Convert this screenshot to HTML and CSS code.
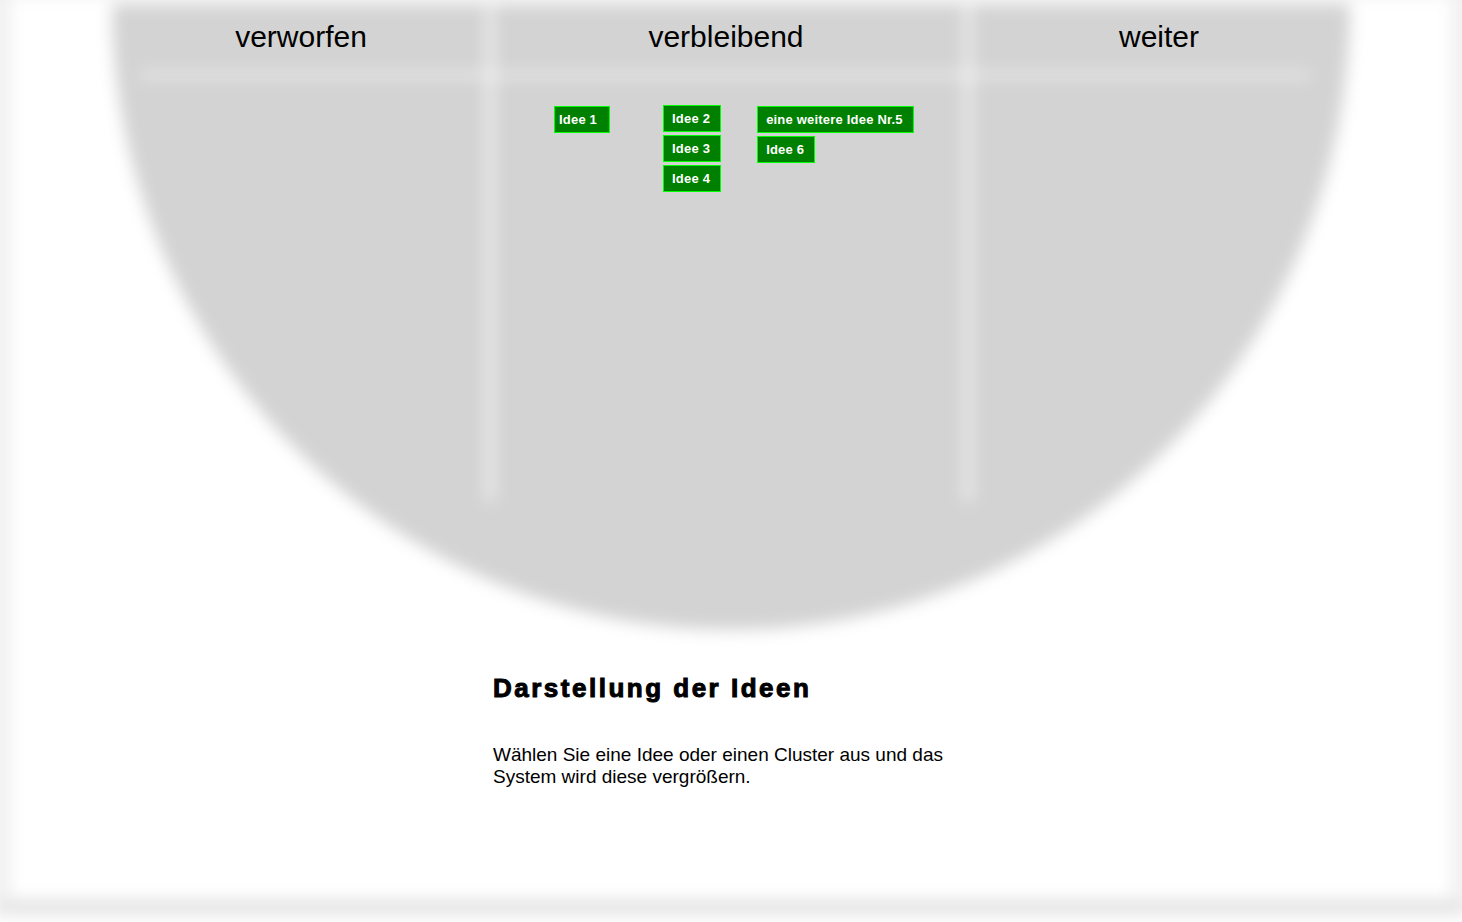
FILE: index.html
```html
<!DOCTYPE html>
<html lang="de">
<head>
<meta charset="utf-8">
<title>Darstellung der Ideen</title>
<link rel="stylesheet" href="styles.css">
</head>
<body>
<div class="page">
  <div class="backdrop" aria-hidden="true">
    <div class="frame"></div>
    <div class="disc"></div>
    <div class="rule rule-h"></div>
    <div class="rule rule-v rule-v1"></div>
    <div class="rule rule-v rule-v2"></div>
  </div>

  <div class="board">
    <div class="col">
      <div class="col-title">verworfen</div>
    </div>
    <div class="col">
      <div class="col-title col-title-mid">verbleibend</div>
      <div class="col-body">
        <div class="stack stack-a">
          <div class="idea idea-tight">Idee 1</div>
        </div>
        <div class="stack stack-b">
          <div class="idea">Idee 2</div>
          <div class="idea">Idee 3</div>
          <div class="idea">Idee 4</div>
        </div>
        <div class="stack">
          <div class="idea">eine weitere Idee Nr.5</div>
          <div class="idea">Idee 6</div>
        </div>
      </div>
    </div>
    <div class="col">
      <div class="col-title">weiter</div>
    </div>
  </div>

  <section class="info">
    <h2 class="info-title">Darstellung der Ideen</h2>
    <p class="info-text">Wählen Sie eine Idee oder einen Cluster aus und das System wird diese vergrößern.</p>
  </section>
</div>
</body>
</html>
```

FILE: styles.css
```css
html, body {
  margin: 0;
  padding: 0;
  background: #ffffff;
}

.page {
  position: relative;
  width: 1462px;
  height: 922px;
  overflow: hidden;
  font-family: "Liberation Sans", Arial, sans-serif;
  color: #000;
}

/* blurred decoration layer underneath everything */
.backdrop {
  position: absolute;
  inset: 0;
  filter: blur(8px);
  z-index: 0;
}

.frame {
  position: absolute;
  left: -10px;
  right: -10px;
  top: -24px;
  bottom: 8px;
  border: 20px solid #efefef;
  border-bottom-width: 14px;
  border-bottom-color: #e0e0e0;
  background: #ffffff;
}

.disc {
  position: absolute;
  left: 112px;
  top: 4px;
  width: 1238px;
  height: 626px;
  background: #d3d3d3;
  border-radius: 0 0 619px 619px / 0 0 626px 626px;
}

.rule {
  position: absolute;
  background: rgba(255, 255, 255, 0.85);
}

.rule-h {
  left: 140px;
  width: 1170px;
  top: 73px;
  height: 4px;
}

.rule-v {
  top: 6px;
  width: 6px;
  height: 496px;
  border-radius: 3px;
}

.rule-v1 { left: 487px; }
.rule-v2 { left: 965px; }

/* columns */
.board {
  position: relative;
  z-index: 1;
  margin-left: 112px;
  width: 1238px;
  height: 674px;
  display: grid;
  grid-template-columns: 378px 478px 382px;
  align-items: start;
}

.col-title {
  box-sizing: border-box;
  height: 75px;
  padding-top: 20px;
  font-size: 30px;
  line-height: 34px;
  text-align: center;
}

.col-title-mid { padding-right: 6px; }

.col-body {
  display: flex;
  align-items: flex-start;
  padding: 31px 0 0 64px;
}

.stack {
  display: flex;
  flex-direction: column;
  align-items: flex-start;
  gap: 3px;
}

.stack-a { margin-right: 53px; }
.stack-b { margin-right: 36px; margin-top: -1px; }

.idea {
  box-sizing: border-box;
  height: 27px;
  padding: 0 10px 0 8px;
  border: 1px solid #00ff00;
  background: #008000;
  color: #ffffff;
  font-size: 13px;
  font-weight: bold;
  letter-spacing: 0.2px;
  line-height: 25px;
  white-space: nowrap;
}

.idea-tight { padding: 0 12px 0 4px; }

/* description */
.info {
  position: relative;
  z-index: 1;
  width: 476px;
  margin: 0 auto;
}

.info-title {
  margin: 0;
  font-size: 26px;
  line-height: 28px;
  font-weight: bold;
  letter-spacing: 2.5px;
  -webkit-text-stroke: 1px #000;
}

.info-text {
  margin: 42px 0 0;
  font-size: 19px;
  line-height: 22px;
}
```
